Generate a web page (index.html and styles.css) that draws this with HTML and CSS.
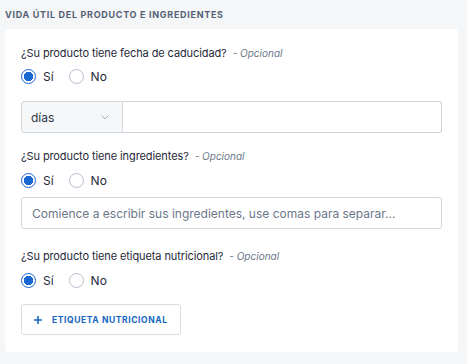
FILE: index.html
```html
<!DOCTYPE html>
<html lang="es">

<head>
    <meta charset="UTF-8">
    <link rel="stylesheet" href="styles.css">
    <title>Vida útil del producto</title>
</head>

<body>
    <h2 class="section-title">Vida útil del producto e ingredientes</h2>

    <div class="card">
        <div class="question">
            <span class="question-text">¿Su producto tiene fecha de caducidad?</span>
            <span class="optional">- Opcional</span>
        </div>
        <div class="radios">
            <label class="radio"><span class="dot checked"></span>Sí</label>
            <label class="radio"><span class="dot"></span>No</label>
        </div>
        <div class="input-group">
            <div class="select">
                <span>días</span>
                <svg width="8" height="5" viewBox="0 0 8 5"><path d="M0.5 0.5l3.5 3.5L7.5 0.5" fill="none" stroke="#a7b0bd" stroke-width="1"/></svg>
            </div>
            <input type="text" class="field">
        </div>

        <div class="question">
            <span class="question-text">¿Su producto tiene ingredientes?</span>
            <span class="optional">- Opcional</span>
        </div>
        <div class="radios second">
            <label class="radio"><span class="dot checked"></span>Sí</label>
            <label class="radio"><span class="dot"></span>No</label>
        </div>
        <input type="text" class="field full" placeholder="Comience a escribir sus ingredientes, use comas para separar...">

        <div class="question third">
            <span class="question-text">¿Su producto tiene etiqueta nutricional?</span>
            <span class="optional">- Opcional</span>
        </div>
        <div class="radios second">
            <label class="radio"><span class="dot checked"></span>Sí</label>
            <label class="radio"><span class="dot"></span>No</label>
        </div>
        <button class="add-button">
            <svg width="8" height="8" viewBox="0 0 8 8"><path d="M4 0v8M0 4h8" stroke="#1565c0" stroke-width="1.6"/></svg>
            Etiqueta nutricional
        </button>
    </div>
</body>

</html>
```

FILE: styles.css
```css
body {
    font-family: Inter, "Noto Sans", sans-serif;
    margin: 0;
    padding: 0 9px 11px 5px;
    background-color: #f5f6f8;
    color: #1f2a3a;
}

.section-title {
    margin: 0;
    padding-top: 9px;
    height: 20px;
    font-size: 9px;
    font-weight: 700;
    letter-spacing: 0.7px;
    text-transform: uppercase;
    color: #546175;
}

.card {
    background-color: white;
    border-radius: 4px;
    padding: 16px 16px 17px 16px;
}

.question {
    height: 16px;
    line-height: 16px;
    font-size: 11px;
    letter-spacing: -0.1px;
}

.question.third {
    margin-top: 19px;
}

.optional {
    font-size: 10px;
    font-style: italic;
    color: #6b7789;
    margin-left: 3px;
    letter-spacing: 0;
}

.radios {
    display: flex;
    gap: 15px;
    margin-top: 7px;
    height: 16px;
    align-items: center;
}

.radios.second {
    margin-top: 8px;
}

.radio {
    display: flex;
    align-items: center;
    gap: 7px;
    font-size: 12px;
}

.dot {
    width: 13px;
    height: 13px;
    border: 1px solid #b9c1cd;
    border-radius: 50%;
    box-sizing: content-box;
}

.dot.checked {
    border: 1px solid #1967d2;
    background: radial-gradient(circle, #1967d2 0 4.5px, white 5px);
}

.input-group {
    display: flex;
    height: 32px;
    margin-top: 17px;
    margin-bottom: 15px;
}

.select {
    width: 102px;
    display: flex;
    align-items: center;
    justify-content: space-between;
    padding: 0 13px 0 9px;
    box-sizing: border-box;
    background-color: #f6f7f9;
    border: 1px solid #d3d8df;
    border-radius: 3px 0 0 3px;
    font-size: 12px;
    color: #2a3546;
}

.field {
    flex: 1;
    border: 1px solid #cbd1da;
    border-left: none;
    border-radius: 0 3px 3px 0;
    margin: 0;
    padding: 0 10px;
    font-family: Inter, "Noto Sans", sans-serif;
    font-size: 12px;
}

.field.full {
    display: block;
    width: 100%;
    box-sizing: border-box;
    height: 32px;
    margin-top: 9px;
    border: 1px solid #d3d8df;
    border-radius: 3px;
}

.field.full::placeholder {
    color: #6b7789;
}

.add-button {
    margin-top: 16px;
    display: flex;
    align-items: center;
    gap: 10px;
    height: 31px;
    padding: 0 12px;
    background-color: white;
    border: 1px solid #d8dde5;
    border-radius: 3px;
    color: #1565c0;
    font-family: Inter, "Noto Sans", sans-serif;
    font-size: 8.5px;
    font-weight: 700;
    letter-spacing: 0.6px;
    text-transform: uppercase;
    cursor: pointer;
}
```
